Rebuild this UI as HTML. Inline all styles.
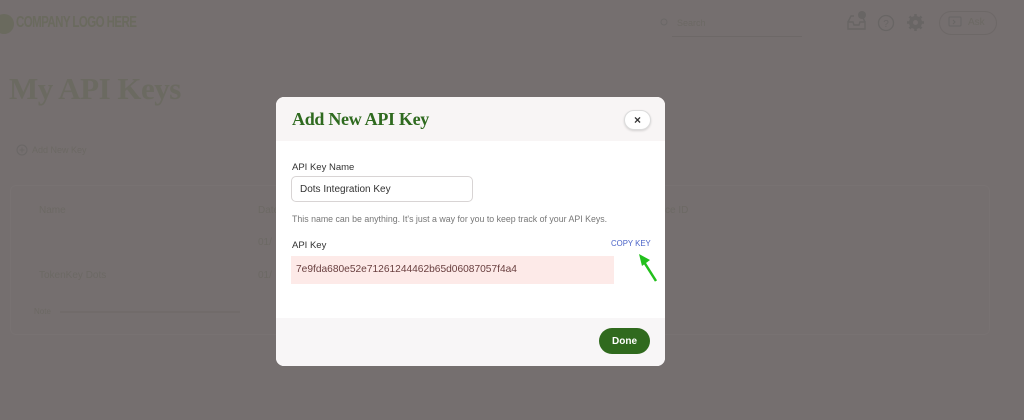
<!DOCTYPE html>
<html><head><meta charset="utf-8"><style>
*{margin:0;padding:0;box-sizing:border-box}
body{width:1024px;height:420px;overflow:hidden;background:#756f6f;font-family:"Liberation Sans",sans-serif;position:relative}
.a{position:absolute}
.dim{color:#6c6964}
</style></head><body>
<div class="a" style="left:-6px;top:14px;width:20px;height:20px;border-radius:50%;background:#6a6a5e"></div>
<div class="a" style="left:16px;top:14px;font:bold 16px 'Liberation Sans',sans-serif;color:#6a6a5e;letter-spacing:-0.8px;transform:scaleX(0.72);transform-origin:left;white-space:nowrap">COMPANY LOGO HERE</div>
<div class="a" style="left:9px;top:71px;font:bold 31px 'Liberation Serif',serif;color:#6b6a61;letter-spacing:-0.5px">My API Keys</div>
<svg class="a" style="left:16px;top:144px" width="12" height="12"><circle cx="6" cy="6" r="5" fill="none" stroke="#6a6766" stroke-width="1"/><path d="M6 3.5v5M3.5 6h5" stroke="#6a6766"/></svg>
<div class="a dim" style="left:32px;top:145px;font-size:9px">Add New Key</div>
<div class="a" style="left:10px;top:185px;width:980px;height:150px;border:1px solid #787272;border-radius:6px"></div>
<div class="a dim" style="left:39px;top:205px;font-size:10px">Name</div>
<div class="a dim" style="left:258px;top:205px;font-size:10px">Date</div>
<div class="a dim" style="left:665px;top:205px;font-size:10px">ce ID</div>
<div class="a dim" style="left:258px;top:237px;font-size:10px">01/</div>
<div class="a dim" style="left:39px;top:270px;font-size:10px">TokenKey Dots</div>
<div class="a dim" style="left:258px;top:270px;font-size:10px">01/</div>
<div class="a dim" style="left:34px;top:307px;font-size:8px">Note</div>
<div class="a" style="left:60px;top:311px;width:180px;height:2px;background:#716b6a"></div>
<svg class="a" style="left:660px;top:18px" width="10" height="10"><circle cx="4" cy="4" r="3" fill="none" stroke="#6b6867"/></svg>
<div class="a dim" style="left:677px;top:18px;font-size:9px">Search</div>
<div class="a" style="left:672px;top:36px;width:130px;height:1px;background:#6d6867"></div>
<svg class="a" style="left:846px;top:10px" width="22" height="22"><path d="M2 12h5l1 3h5l1-3h5v7H2z M2 12l3-6h3M19 12l-3-6h-3" fill="none" stroke="#686564" stroke-width="1.4"/><circle cx="16" cy="5" r="4" fill="#686564"/></svg>
<svg class="a" style="left:877px;top:14px" width="18" height="18"><circle cx="9" cy="9" r="7.5" fill="none" stroke="#686564" stroke-width="1.3"/><text x="9" y="13" text-anchor="middle" font-size="10" fill="#686564" font-family="Liberation Sans">?</text></svg>
<svg class="a" style="left:906px;top:13px" width="19" height="19"><circle cx="9.5" cy="9.5" r="6.5" fill="#686564"/><circle cx="9.5" cy="9.5" r="2.5" fill="#756f6f"/><path d="M9.5 1v3M9.5 15v3M1 9.5h3M15 9.5h3M3.5 3.5l2 2M13.5 13.5l2 2M3.5 15.5l2-2M13.5 5.5l2-2" stroke="#686564" stroke-width="2.5"/></svg>
<div class="a" style="left:939px;top:11px;width:58px;height:24px;border:1px solid #6d6867;border-radius:12px"></div>
<svg class="a" style="left:948px;top:16px" width="14" height="13"><rect x="1" y="1" width="12" height="9" rx="1" fill="none" stroke="#686564"/><path d="M5 4l2 2-2 2" fill="none" stroke="#686564"/></svg>
<div class="a dim" style="left:968px;top:17px;font-size:10px">Ask</div>

<div class="a" style="left:276px;top:97px;width:389px;height:269px;background:#fff;border-radius:8px;overflow:hidden">
  <div style="height:44px;background:#f8f5f5"></div>
  <div class="a" style="left:0;top:221px;width:389px;height:48px;background:#f8f6f7"></div>
</div>
<div class="a" style="left:292px;top:109px;font:bold 18px 'Liberation Serif',serif;color:#2f6a1f;letter-spacing:-0.3px">Add New API Key</div>
<div class="a" style="left:624px;top:110px;width:27px;height:20px;background:#fff;border:1px solid #dcdcdc;border-radius:10px;box-shadow:0 1px 2px rgba(0,0,0,.15);text-align:center;font:bold 12px/18px 'Liberation Sans',sans-serif;color:#333">×</div>
<div class="a" style="left:292px;top:162px;font-size:9.5px;color:#333">API Key Name</div>
<div class="a" style="left:291px;top:176px;width:182px;height:26px;border:1px solid #d8d4d4;border-radius:5px;font-size:10px;color:#333;padding:7px 0 0 8px">Dots Integration Key</div>
<div class="a" style="left:292px;top:214px;font-size:8.8px;color:#777">This name can be anything. It's just a way for you to keep track of your API Keys.</div>
<div class="a" style="left:292px;top:240px;font-size:9.5px;color:#333">API Key</div>
<div class="a" style="left:611px;top:239px;font-size:7.8px;color:#4a63c8">COPY KEY</div>
<div class="a" style="left:291px;top:256px;width:323px;height:28px;background:#fdeae8;font-size:10.2px;color:#6a4040;padding:8px 0 0 5px">7e9fda680e52e71261244462b65d06087057f4a4</div>
<svg class="a" style="left:634px;top:250px" width="26" height="34"><path d="M22 31L10 12" stroke="#22c01c" stroke-width="2.5"/><path d="M5 4l11 6-8 6z" fill="#22c01c"/></svg>
<div class="a" style="left:599px;top:328px;width:51px;height:26px;background:#306a1e;border-radius:13px;color:#fff;font:bold 10px/26px 'Liberation Sans',sans-serif;text-align:center;padding-top:1px">Done</div>
</body></html>
